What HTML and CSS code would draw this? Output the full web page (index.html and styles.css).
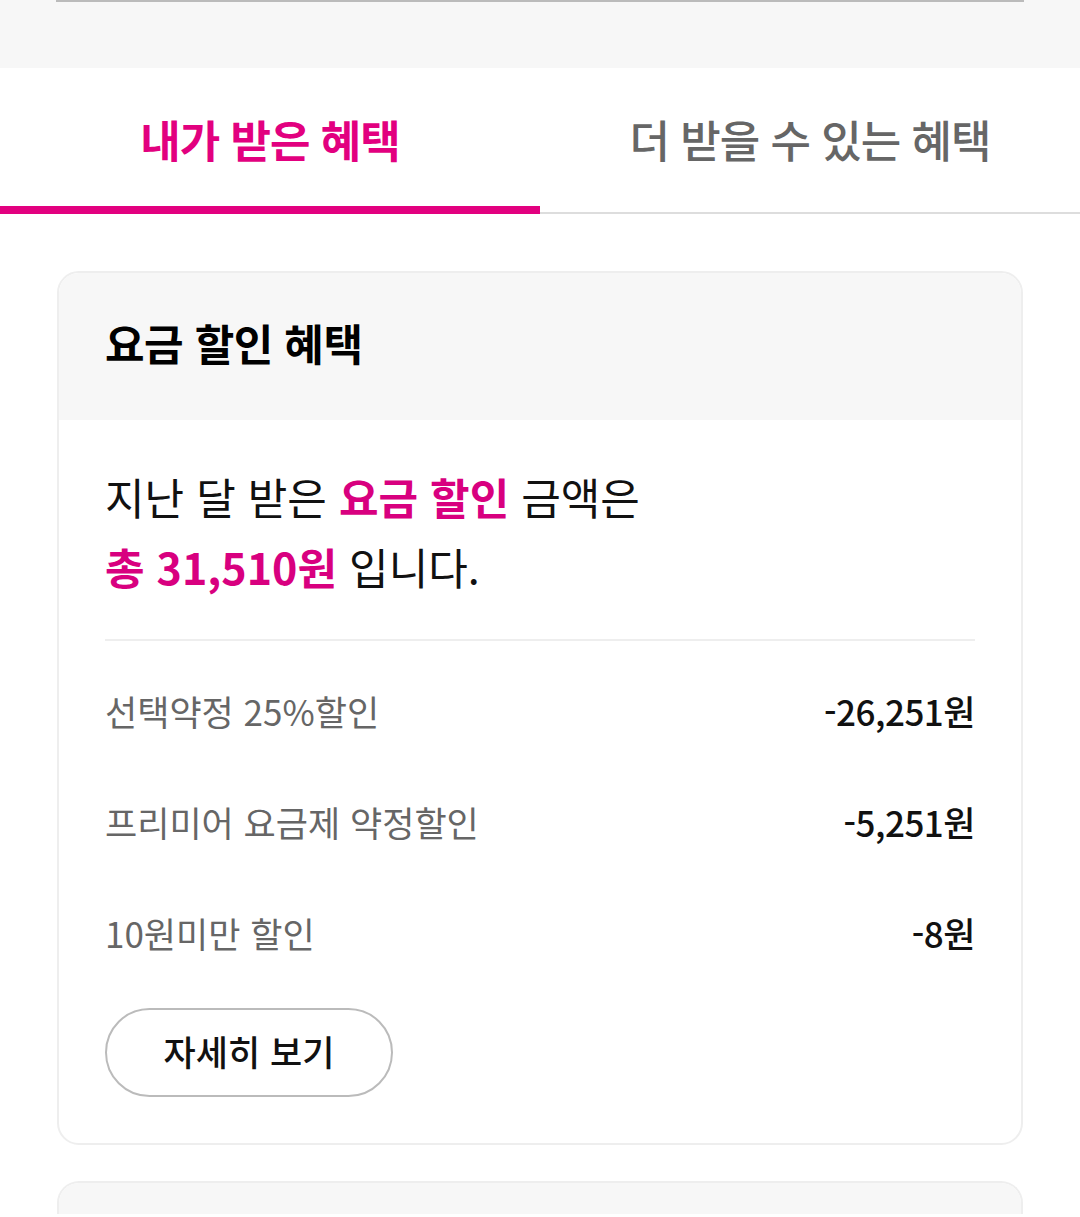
FILE: index.html
```html
<!DOCTYPE html>
<html lang="ko">
<head>
<meta charset="utf-8">
<link rel="stylesheet" href="styles.css">
</head>
<body>
<div class="top">
  <div class="top-line"></div>
</div>
<div class="tabs">
  <div class="tab active">내가 받은 혜택</div>
  <div class="tab">더 받을 수 있는 혜택</div>
</div>
<div class="content">
  <div class="card">
    <div class="card-head">요금 할인 혜택</div>
    <div class="card-body">
      <p class="summary">지난 달 받은 <b class="pink">요금 할인</b> 금액은<br><b class="pink">총 31,510원</b> 입니다.</p>
      <div class="divider"></div>
      <div class="row"><span class="label">선택약정 25%할인</span><span class="value">-26,251원</span></div>
      <div class="row"><span class="label">프리미어 요금제 약정할인</span><span class="value">-5,251원</span></div>
      <div class="row"><span class="label">10원미만 할인</span><span class="value">-8원</span></div>
      <button class="more">자세히 보기</button>
    </div>
  </div>
  <div class="card next">
    <div class="card-head peek"></div>
  </div>
</div>
</body>
</html>
```

FILE: styles.css
```css
* { box-sizing: border-box; }
html, body { margin: 0; padding: 0; }
body {
  background: #fff;
  font-family: "Noto Sans CJK KR", "Noto Sans", sans-serif;
  color: #111;
  width: 1080px;
  height: 1217px;
  overflow: hidden;
}
.top {
  height: 68px;
  background: #f7f7f7;
  padding: 0 56px;
}
.top-line {
  height: 2px;
  background: #bbb;
}
.tabs {
  display: flex;
  height: 146px;
}
.tab {
  flex: 1;
  display: flex;
  align-items: center;
  justify-content: center;
  padding-bottom: 2px;
  font-size: 44px;
  letter-spacing: -1px;
  font-weight: 500;
  color: #666;
  border-bottom: 2px solid #ddd;
}
.tab.active {
  color: #e2007f;
  font-weight: 700;
  border-bottom: 8px solid #e2007f;
  padding-top: 4px;
  padding-bottom: 0;
}
.content {
  padding: 57px 57px 0 57px;
}
.card {
  border: 2px solid #eee;
  border-radius: 22px;
  overflow: hidden;
}
.card-head {
  height: 147px;
  background: #f7f7f7;
  padding-left: 46px;
  padding-bottom: 9px;
  display: flex;
  align-items: center;
  font-size: 43px;
  font-weight: 700;
  letter-spacing: -0.5px;
  color: #000;
}
.card-head.peek {
  height: 31px;
  padding: 0;
}
.card-body {
  padding: 41px 46px 46px 46px;
}
.summary {
  margin: 0;
  font-size: 43px;
  line-height: 70px;
  letter-spacing: 0;
  color: #111;
}
.pink { color: #d8007f; font-weight: 700; }
.divider {
  height: 2px;
  background: #eee;
  margin-top: 38px;
  margin-bottom: 14px;
}
.row {
  height: 111px;
  display: flex;
  justify-content: space-between;
  align-items: center;
  font-size: 35px;
  letter-spacing: 0;
}
.label { color: #666; }
.value { color: #111; font-weight: 500; letter-spacing: -0.5px; }
.more {
  display: block;
  margin-top: 20px;
  width: 288px;
  height: 89px;
  border: 2px solid #bbb;
  border-radius: 45px;
  background: #fff;
  font-family: inherit;
  font-size: 35px;
  font-weight: 500;
  letter-spacing: 0;
  color: #111;
  padding: 0 0 4px 0;
}
.card.next {
  margin-top: 36px;
  border-bottom: none;
  border-bottom-left-radius: 0;
  border-bottom-right-radius: 0;
}
```
